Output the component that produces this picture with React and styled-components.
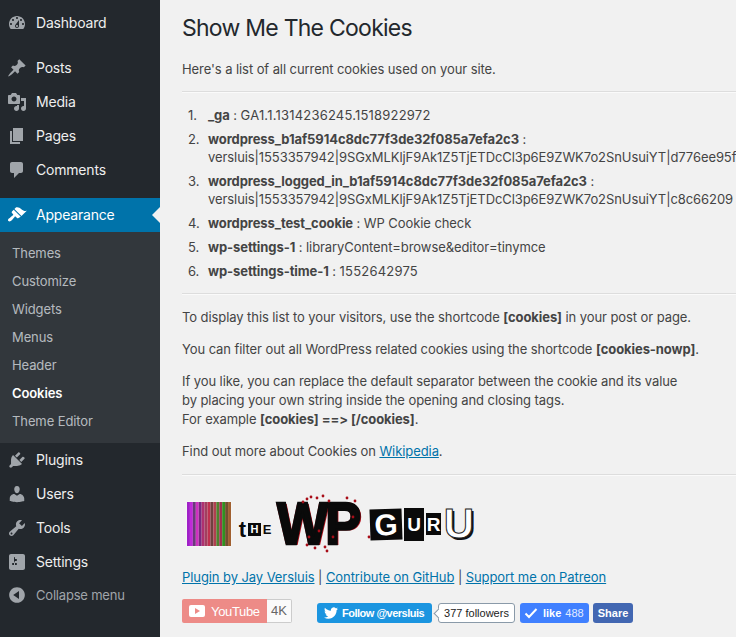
import React from 'react'
import styled, { createGlobalStyle } from 'styled-components'

const Global = createGlobalStyle`
html, body { margin: 0; padding: 0; background: #f1f1f1; overflow: hidden; }
body { font-family: Inter, "Liberation Sans", sans-serif; font-size: 13px; color: #444; }
`
const Page = styled.div`
display: flex;
width: 736px;
height: 637px;
overflow: hidden;
`
const Sidebar = styled.nav`
width: 160px;
flex: none;
background: #23282d;
padding-top: 6px;
`
const Group = styled.div`
margin-bottom: ${p => p.$gap || 0}px;
`
const Item = styled.a`
display: flex;
align-items: center;
height: 34px;
box-sizing: border-box;
position: relative;
padding: 0 0 2px 7px;
font-size: 14px;
letter-spacing: -.2px;
color: ${p => p.$active ? '#fff' : '#eee'};
background: ${p => p.$active ? '#0073aa' : 'transparent'};
svg { width: 20px; height: 20px; fill: ${p => p.$active ? '#fff' : '#a0a5aa'}; margin: 2px 9px 0 0; flex: none; }
`
const Arrow = styled.span`
position: absolute;
right: 0;
top: 9px;
border: 8px solid transparent;
border-right-color: #f1f1f1;
border-left: 0;
`
const Submenu = styled.div`
background: #32373c;
padding: 7px 0 8px;
`
const SubItem = styled.a`
display: flex;
align-items: center;
height: 28px;
padding-left: 12px;
font-size: 13px;
letter-spacing: -.1px;
color: ${p => p.$current ? '#fff' : 'rgba(240,245,250,.7)'};
font-weight: ${p => p.$current ? 600 : 400};
`
const Collapse = styled(Item)`
color: #a0a5aa;
font-size: 13px;
height: 32px;
padding-bottom: 0;
svg { margin-top: 0; }
`
const Main = styled.main`
flex: 1;
min-width: 0;
padding: 0 0 0 22px;
`
const Title = styled.h1`
margin: 0;
padding: 14px 0 0;
font-size: 23px;
line-height: 29px;
font-weight: 400;
letter-spacing: -.75px;
color: #23282d;
`
const Text = styled.p`
margin: ${p => p.$top || 13}px 0 0;
line-height: 19px;
letter-spacing: -.08px;
white-space: nowrap;
`
const Rule = styled.hr`
border: 0;
border-top: 1px solid #ddd;
border-bottom: 1px solid #fafafa;
margin: ${p => p.$top || 13}px 0 0;
`
const CookieList = styled.ol`
margin: 13px 0 0;
padding: 0 0 0 26px;
line-height: 18px;
letter-spacing: -.08px;
list-style: none;
counter-reset: cookie;
li {
  position: relative;
  margin-bottom: 6px;
  white-space: nowrap;
  counter-increment: cookie;
}
li::before {
  content: counter(cookie) ".";
  position: absolute;
  left: -20px;
}
`
const Num = styled.span`
letter-spacing: .2px;
`
const Value = styled.div``
const Link = styled.a`
color: #0073aa;
text-decoration: underline;
`
const Logo = styled.div`
display: flex;
align-items: center;
height: 56px;
margin-top: 20px;
padding-left: 5px;
`
const Swatch = styled.svg`
width: 44px;
height: 44px;
flex: none;
box-shadow: 0 0 2px #fff;
`
const LogoThe = styled.div`
display: flex;
align-items: center;
width: 36px;
height: 20px;
margin: 11px 0 0 6px;
flex: none;
`
const LogoWp = styled.span`
position: relative;
display: block;
width: 88px;
height: 46px;
margin: 0 0 1px 4px;
flex: none;
font: 700 60px/46px "Liberation Sans", sans-serif;
letter-spacing: -3px;
color: #0a0a0a;
-webkit-text-stroke: 2.5px #0a0a0a;
text-shadow: 1px 0 0 #b3121d, -1px 0 0 #b3121d, 0 -1px 0 #b3121d, 2px 1px 0 #b3121d;
svg { position: absolute; left: 0; top: -8px; width: 100px; height: 60px; fill: #a80d18; }
`
const WpInner = styled.span`
display: inline-block;
transform-origin: 0 50%;
transform: scaleX(.9);
`
const LogoGuru = styled.div`
display: flex;
align-items: center;
gap: 2px;
margin-left: 5px;
flex: none;
`
const Letter = styled.span`
display: flex;
align-items: center;
justify-content: center;
width: ${p => p.$w}px;
height: ${p => p.$h}px;
background: ${p => p.$dark ? '#0a0a0a' : 'transparent'};
color: ${p => p.$dark ? '#fff' : '#0a0a0a'};
font: 700 ${p => p.$size}px/1 "Liberation Sans", sans-serif;
transform: rotate(${p => p.$tilt || 0}deg);
`
const BigU = styled(Letter)`
color: #fff;
-webkit-text-stroke: 1px #222;
text-shadow: 2px 2px 0 #111;
`
const Footer = styled.p`
margin: 16px 0 0;
line-height: 19px;
letter-spacing: -.08px;
`
const Badges = styled.div`
display: flex;
align-items: flex-start;
margin-top: 12px;
`
const YouTube = styled.div`
display: flex;
align-items: center;
height: 24px;
width: 85px;
padding-left: 7px;
box-sizing: border-box;
background: #ed8b87;
border-radius: 2px 0 0 2px;
color: #fff;
font: 13px "Liberation Sans", sans-serif;
letter-spacing: -.35px;
gap: 6px;
svg { width: 16px; height: 12px; }
`
const YouTubeCount = styled.div`
width: 25px;
height: 24px;
box-sizing: border-box;
border: 1px solid #ccc;
border-left: 0;
border-radius: 0 2px 2px 0;
background: #fafafa;
font: 13px/22px "Liberation Sans", sans-serif;
text-align: center;
color: #666;
`
const Social = styled.div`
display: flex;
align-items: center;
margin: 4px 0 0 25px;
font: 700 11px "Liberation Sans", sans-serif;
`
const TwitterButton = styled.div`
display: flex;
align-items: center;
gap: 4px;
height: 20px;
width: 115px;
box-sizing: border-box;
padding-left: 7px;
background: #1b95e0;
border-radius: 3px;
color: #fff;
letter-spacing: -.5px;
svg { width: 14px; height: 14px; fill: #fff; }
`
const Followers = styled.div`
position: relative;
margin-left: 6px;
height: 20px;
width: 77px;
box-sizing: border-box;
border: 1px solid #8a9aa9;
border-radius: 3px;
background: #fff;
color: #222;
font: 400 11px/18px "Liberation Sans", sans-serif;
text-align: center;
&::before {
  content: '';
  position: absolute;
  left: -4px;
  top: 6px;
  width: 6px;
  height: 6px;
  background: #fff;
  border-left: 1px solid #8a9aa9;
  border-bottom: 1px solid #8a9aa9;
  transform: rotate(45deg);
}
`
const LikeButton = styled.div`
display: flex;
align-items: center;
height: 20px;
width: 69px;
box-sizing: border-box;
margin: -1px 0 0 5px;
padding-left: 4px;
background: #4080ff;
border-radius: 3px;
color: #fff;
svg { width: 14px; height: 14px; margin-right: 5px; }
span { font-weight: 400; margin-left: 4px; opacity: .85; }
`
const ShareButton = styled.div`
height: 20px;
width: 40px;
margin: -1px 0 0 4px;
background: #4267b2;
border-radius: 3px;
color: #fff;
line-height: 20px;
text-align: center;
`

const icons = {
  dashboard: 'M3.76 16h12.48c1.1-1.37 1.76-3.11 1.76-5 0-4.42-3.58-8-8-8s-8 3.58-8 8c0 1.89.66 3.63 1.76 5zM10 4c.55 0 1 .45 1 1s-.45 1-1 1-1-.45-1-1 .45-1 1-1zM6 6c.55 0 1 .45 1 1s-.45 1-1 1-1-.45-1-1 .45-1 1-1zm8 0c.55 0 1 .45 1 1s-.45 1-1 1-1-.45-1-1 .45-1 1-1zm-5.37 5.55L12 7v6c0 1.1-.9 2-2 2s-2-.9-2-2c0-.57.24-1.08.63-1.45zM4 10c.55 0 1 .45 1 1s-.45 1-1 1-1-.45-1-1 .45-1 1-1zm12 0c.55 0 1 .45 1 1s-.45 1-1 1-1-.45-1-1 .45-1 1-1zm-5 3c0-.55-.45-1-1-1s-1 .45-1 1 .45 1 1 1 1-.45 1-1z',
  post: 'M10.44 3.02l1.82-1.82 6.36 6.35-1.83 1.82c-1.05-.68-2.48-.57-3.41.36l-.75.75c-.92.93-1.04 2.35-.35 3.41l-1.83 1.82-2.41-2.41-2.8 2.79c-.42.42-3.38 2.71-3.8 2.29s1.86-3.39 2.28-3.81l2.79-2.79L4.1 9.36l1.83-1.82c1.05.69 2.48.57 3.4-.36l.75-.75c.93-.92 1.05-2.35.36-3.41z',
  media: 'M13 11V4c0-.55-.45-1-1-1h-1.67L9 1H5L3.67 3H2c-.55 0-1 .45-1 1v7c0 .55.45 1 1 1h10c.55 0 1-.45 1-1zM7 4.5c1.38 0 2.5 1.12 2.5 2.5S8.38 9.5 7 9.5 4.5 8.38 4.5 7 5.62 4.5 7 4.5zM14 6h5v10.5c0 1.38-1.12 2.5-2.5 2.5S14 17.88 14 16.5s1.12-2.5 2.5-2.5c.17 0 .34.02.5.05V9h-3V6zm-4 8.05V13h2v3.5c0 1.38-1.12 2.5-2.5 2.5S7 17.88 7 16.5 8.12 14 9.5 14c.17 0 .34.02.5.05z',
  page: 'M6 15V2h10v13H6zm-1 1h8v2H3V5h2v11z',
  comments: 'M5 2h9c1.1 0 2 .9 2 2v7c0 1.1-.9 2-2 2h-2l-5 5v-5H5c-1.1 0-2-.9-2-2V4c0-1.1.9-2 2-2z',
  appearance: 'M14.48 11.06L7.41 3.99l1.5-1.5c.5-.56 2.3-.47 3.51.32 1.21.8 1.43 1.28 2.91 2.1 1.18.64 2.45 1.26 4.45.85zm-.71.71L6.7 4.7 4.93 6.47c-.39.39-.39 1.02 0 1.41l1.06 1.06c.39.39.39 1.03 0 1.42-.6.6-1.43 1.11-2.21 1.69-.35.26-.7.53-1.01.84C1.43 13.23.4 14.96 1.3 15.9l.15.15c.9.9 2.64.04 3.58-.94.31-.31.58-.65.84-1.01.58-.78 1.09-1.61 1.69-2.21.39-.39 1.03-.39 1.42 0l1.06 1.06c.39.39 1.02.39 1.41 0z',
  plugins: 'M13.11 4.36L9.87 7.6 8 5.73l3.24-3.24c.35-.34 1.05-.2 1.56.32.52.51.66 1.21.31 1.55zm-8 1.77l.91-1.12 9.01 9.01-1.19.84c-.71.71-2.63 1.16-3.82 1.16H6.14L4.9 17.26c-.59.59-1.54.59-2.12 0-.59-.58-.59-1.53 0-2.12l1.24-1.24v-3.88c0-1.13.4-3.19 1.09-3.89zm7.26 3.97l3.24-3.24c.34-.35 1.04-.21 1.55.31.52.51.66 1.21.31 1.55l-3.24 3.25z',
  users: 'M10 9.25c-2.27 0-2.73-3.44-2.73-3.44C7 4.02 7.82 2 9.97 2c2.16 0 2.98 2.02 2.71 3.81 0 0-.41 3.44-2.68 3.44zm0 2.57L12.72 10c2.39 0 4.52 2.33 4.52 4.53v2.49s-3.65 1.13-7.24 1.13c-3.65 0-7.24-1.13-7.24-1.13v-2.49c0-2.25 1.94-4.48 4.47-4.48z',
  tools: 'M16.68 9.77c-1.34 1.34-3.3 1.67-4.95.99l-5.41 6.52c-.99.99-2.59.99-3.58 0s-.99-2.59 0-3.57l6.52-5.42c-.68-1.65-.35-3.61.99-4.95 1.28-1.28 3.12-1.62 4.72-1.06l-2.89 2.89 2.82 2.82 2.86-2.87c.53 1.58.18 3.39-1.08 4.65zM3.81 16.21c.4.39 1.04.39 1.43 0 .4-.4.4-1.04 0-1.43-.39-.4-1.03-.4-1.43 0-.39.39-.39 1.03 0 1.43z',
  settings: 'M18 16V4c0-1.1-.9-2-2-2H4c-1.1 0-2 .9-2 2v12c0 1.1.9 2 2 2h12c1.1 0 2-.9 2-2zM8 11h1c.55 0 1 .45 1 1s-.45 1-1 1H8v1.5c0 .28-.22.5-.5.5s-.5-.22-.5-.5V13H6c-.55 0-1-.45-1-1s.45-1 1-1h1V5.5c0-.28.22-.5.5-.5s.5.22.5.5V7h1c.55 0 1 .45 1 1s-.45 1-1 1h-1v5.5c0 .28-.22.5-.5.5s-.5-.22-.5-.5V9z',
  collapse: 'M10 2.16c4.33 0 7.84 3.51 7.84 7.84s-3.51 7.84-7.84 7.84S2.16 14.33 2.16 10 5.71 2.16 10 2.16zm2 11.72V6.12L6.18 9.97z',
}

const Icon = ({ name }) => <svg viewBox="0 0 20 20"><path d={icons[name]} /></svg>

const subItems = ['Themes', 'Customize', 'Widgets', 'Menus', 'Header', 'Cookies', 'Theme Editor']
const stripes = ['#a020c8', '#c02ad8', '#6a3a7a', '#d030c0', '#7a2a80', '#b03070', '#a04060', '#c03050', '#704040', '#b04050', '#508030', '#a03050', '#309020', '#705030', '#a06030']
const splatter = [[30, 6], [34, 4], [40, 5], [46, 3], [26, 9], [52, 8], [70, 5], [78, 8], [30, 52], [38, 55], [48, 54], [56, 44], [42, 38], [50, 58], [32, 44], [76, 24], [92, 44]]

const App = () => (
  <Page>
    <Global />
    <Sidebar>
      <Group $gap={11}>
        <Item><Icon name="dashboard" />Dashboard</Item>
      </Group>
      <Group $gap={11}>
        <Item><Icon name="post" />Posts</Item>
        <Item><Icon name="media" />Media</Item>
        <Item><Icon name="page" />Pages</Item>
        <Item><Icon name="comments" />Comments</Item>
      </Group>
      <Item $active><Icon name="appearance" />Appearance<Arrow /></Item>
      <Submenu>
        {subItems.map(s => <SubItem key={s} $current={s === 'Cookies'}>{s}</SubItem>)}
      </Submenu>
      <Item><Icon name="plugins" />Plugins</Item>
      <Item><Icon name="users" />Users</Item>
      <Item><Icon name="tools" />Tools</Item>
      <Item><Icon name="settings" />Settings</Item>
      <Collapse><Icon name="collapse" />Collapse menu</Collapse>
    </Sidebar>
    <Main>
      <Title>Show Me The Cookies</Title>
      <Text $top={17}>Here's a list of all current cookies used on your site.</Text>
      <Rule $top={12} />
      <CookieList>
        <li><b>_ga</b> : <Num>GA1.1.1314236245.1518922972</Num></li>
        <li>
          <b>wordpress_b1af5914c8dc77f3de32f085a7efa2c3</b> :
          <Value>versluis|1553357942|9SGxMLKljF9Ak1Z5TjETDcCl3p6E9ZWK7o2SnUsuiYT|d776ee95f</Value>
        </li>
        <li>
          <b>wordpress_logged_in_b1af5914c8dc77f3de32f085a7efa2c3</b> :
          <Value>versluis|1553357942|9SGxMLKljF9Ak1Z5TjETDcCl3p6E9ZWK7o2SnUsuiYT|c8c66209</Value>
        </li>
        <li><b>wordpress_test_cookie</b> : WP Cookie check</li>
        <li><b>wp-settings-1</b> : libraryContent=browse&amp;editor=tinymce</li>
        <li><b>wp-settings-time-1</b> : <Num>1552642975</Num></li>
      </CookieList>
      <Rule />
      <Text>To display this list to your visitors, use the shortcode <b>[cookies]</b> in your post or page.</Text>
      <Text>You can filter out all WordPress related cookies using the shortcode <b>[cookies-nowp]</b>.</Text>
      <Text>
        If you like, you can replace the default separator between the cookie and its value<br />
        by placing your own string inside the opening and closing tags.<br />
        For example <b>[cookies] ==&gt; [/cookies]</b>.
      </Text>
      <Text>Find out more about Cookies on <Link>Wikipedia</Link>.</Text>
      <Rule />
      <Logo>
        <Swatch viewBox="0 0 45 45" preserveAspectRatio="none">
          {stripes.map((c, i) => <rect key={i} x={i * 3} y="0" width="3" height="45" fill={c} />)}
        </Swatch>
        <LogoThe>
          <Letter $w={11} $h={20} $size={22}>t</Letter>
          <Letter $dark $w={13} $h={13} $size={11}>H</Letter>
          <Letter $w={12} $h={15} $size={13}>E</Letter>
        </LogoThe>
        <LogoWp>
          <WpInner>WP</WpInner>
          <svg viewBox="0 0 100 60">{splatter.map(([x, y], i) => <circle key={i} cx={x} cy={y} r="1.4" />)}</svg>
        </LogoWp>
        <LogoGuru>
          <Letter $dark $w={32} $h={31} $size={30} $tilt={-2}>G</Letter>
          <Letter $dark $w={20} $h={33} $size={19}>U</Letter>
          <Letter $dark $w={15} $h={22} $size={19}>R</Letter>
          <BigU $w={32} $h={30} $size={42}>U</BigU>
        </LogoGuru>
      </Logo>
      <Footer>
        <Link>Plugin by Jay Versluis</Link> | <Link>Contribute on GitHub</Link> | <Link>Support me on Patreon</Link>
      </Footer>
      <Badges>
        <YouTube>
          <svg viewBox="0 0 16 12"><rect width="16" height="12" rx="2" fill="#fff" /><path d="M6 3l5 3-5 3z" fill="#ed8b87" /></svg>
          YouTube
        </YouTube>
        <YouTubeCount>4K</YouTubeCount>
        <Social>
          <TwitterButton>
            <svg viewBox="0 0 24 24"><path d="M23.95 4.57a10 10 0 0 1-2.82.77 4.96 4.96 0 0 0 2.16-2.72c-.95.55-2 .96-3.13 1.19a4.92 4.92 0 0 0-8.38 4.48C7.69 8.1 4.07 6.13 1.64 3.16a4.82 4.82 0 0 0-.66 2.47c0 1.71.87 3.21 2.19 4.1a4.9 4.9 0 0 1-2.23-.62v.06a4.92 4.92 0 0 0 3.95 4.83 5 5 0 0 1-2.21.08 4.94 4.94 0 0 0 4.6 3.42A9.87 9.87 0 0 1 0 19.54a14 14 0 0 0 7.56 2.21c9.05 0 14-7.5 14-13.98 0-.21 0-.42-.02-.63a9.94 9.94 0 0 0 2.46-2.55z" /></svg>
            Follow @versluis
          </TwitterButton>
          <Followers>377 followers</Followers>
          <LikeButton>
            <svg viewBox="0 0 14 14"><path d="M1.5 7.5l3.5 3.5L12.5 3" fill="none" stroke="#fff" strokeWidth="2" /></svg>
            like<span>488</span>
          </LikeButton>
          <ShareButton>Share</ShareButton>
        </Social>
      </Badges>
    </Main>
  </Page>
)

export default App
